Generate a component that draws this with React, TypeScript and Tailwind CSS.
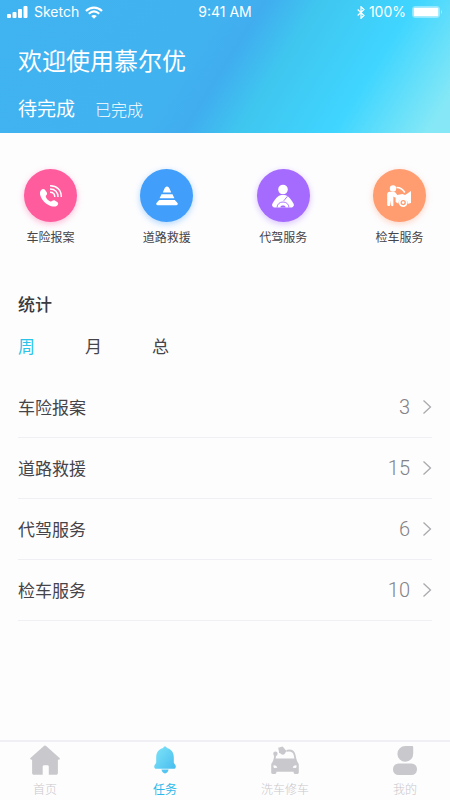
import { useState } from "react";
import type { ReactNode } from "react";

function PhoneIcon() {
  return (
    <svg viewBox="0 0 24 24" className="size-6" fill="none" aria-hidden="true">
      <path
        d="M2.200 6C3.300 4.800 5.300 4.800 6.300 6.200l1.400 2.100c.8 1.300.4 2.300-.6 3.200-.5.500-.5 1 0 1.900.9 1.600 2.100 2.900 3.800 3.800.9.500 1.500.5 2.100-.1.900-.8 2-1 3.200-.3l2 1.300c1.300.9 1.300 2.300.1 3.300-1.500 1.300-3.800 1.500-6 .8C7.200 20.500 3.100 16.400 1.400 11.700.6 9.500.8 7.500 2.200 6Z"
        fill="currentColor"
      />
      <path
        d="M11 1.800c6.900-.1 11.400 4.400 11.300 11.200M11 5c5 0 8.100 3.100 8 8M11 8.200c3 0 4.800 1.800 4.800 4.800"
        stroke="currentColor"
        strokeWidth="1.500"
      />
    </svg>
  );
}

function ConeIcon() {
  return (
    <svg viewBox="0 0 24 24" className="size-6" fill="currentColor" aria-hidden="true">
      <path d="M7.800 8.500 9.300 5C9.900 3.300 10.700 2.400 12 2.400s2.100.9 2.700 2.600l1.500 3.500Z" />
      <path d="M6.500 10.200h11l1.900 4H4.600Z" />
      <path d="M4.200 15.900h15.600l2.700 3.200c.8 1-.1 2.200-1.200 2.200H2.700c-1.100 0-2-1.200-1.200-2.200Z" />
    </svg>
  );
}

function DriverIcon() {
  return (
    <svg viewBox="0 0 24 24" className="size-6" aria-hidden="true">
      <circle cx="12" cy="5.500" r="4.800" fill="currentColor" />
      <path
        d="M7 12.400c1.300-.9 3.200-1.300 5-1.300s3.700.4 5 1.300c1.900 1.300 3.900 4.200 5.600 7.300 1 1.900-.5 3.800-2.500 3.800H3.900c-2 0-3.500-1.900-2.500-3.800C3.100 16.600 5.100 13.700 7 12.400Z"
        fill="currentColor"
      />
      <path d="m16.400 12.300-3.600 4.500M6 23.500c.3-3.400 2.500-5.500 6-5.500s5.700 2.100 6 5.500" fill="none" stroke="#a56bff" strokeWidth="0.900" />
      <path d="m9.300 23.500.4-.9c.4-.8 1.100-1.100 2.300-1.100s1.900.3 2.300 1.100l.4.900Z" fill="#a56bff" />
    </svg>
  );
}

function MechanicIcon() {
  return (
    <svg viewBox="0 0 26 24" className="h-6 w-[26px]" aria-hidden="true">
      <circle cx="7" cy="4.500" r="3.200" fill="currentColor" />
      <path
        d="M1.200 10.500c0-1.900 1-2.900 2.700-2.800l4.400.4c.8.1 1.300.5 1.900 1.400l1 1.500 5.200-.9 2.700.9 5.900-3.900v12l-3 .6a4.800 4.800 0 0 0-9.600 0L9.600 18v-4.500c-.9 0-1.600-.3-2.200-.9V21c0 1.600-2.300 1.600-2.400 0l-.4-4.500L4.200 21c-.2 1.500-3 1.300-3-.3Z"
        fill="currentColor"
      />
      <path d="M10.500 3.500c3.600-.1 6 1.400 8.300 5" fill="none" stroke="currentColor" strokeWidth="1.700" />
      <circle cx="17.200" cy="18.600" r="3.500" fill="#ff9c70" stroke="currentColor" strokeWidth="1.700" />
      <circle cx="17.200" cy="18.600" r="1.300" fill="currentColor" />
    </svg>
  );
}

function HomeIcon() {
  return (
    <svg viewBox="0 0 30 30" className="size-[30px]" fill="currentColor" aria-hidden="true">
      <path d="M13.600 1.200c.9-.8 1.900-.8 2.800 0l12.900 11.500c1 1 .7 2-.8 2h-.6v13.300c0 1.200-.7 1.800-1.800 1.800h-7.300v-8c0-1-.5-1.500-1.500-1.500h-3.100c-1 0-1.500.5-1.500 1.500v8H3.900c-1.100 0-1.800-.6-1.800-1.800V14.700h-.6c-1.500 0-1.800-1-.8-2Z" />
    </svg>
  );
}

function BellIcon() {
  return (
    <svg viewBox="0 0 30 30" className="size-[30px]" aria-hidden="true">
      <defs>
        <linearGradient id="bell" x1="0" y1="0" x2="1" y2="1">
          <stop offset="0.200" stopColor="#74dcf6" />
          <stop offset="1" stopColor="#43b9ee" />
        </linearGradient>
      </defs>
      <path
        d="M15 1.500c1 0 1.700.6 1.800 1.600 4.600 1.100 7 4.500 7 9.100v5.100c0 1.700 2 2.200 2 4.100 0 1.500-.8 2.400-2.100 2.400H6.300c-1.300 0-2.100-.9-2.100-2.400 0-1.900 2-2.400 2-4.100v-5.100c0-4.600 2.400-8 7-9.100.1-1 .8-1.600 1.800-1.600ZM11.400 24.600h7.200c-.5 2.400-1.700 3.800-3.600 3.800s-3.100-1.400-3.600-3.800Z"
        fill="url(#bell)"
      />
    </svg>
  );
}

function CarIcon() {
  return (
    <svg viewBox="0 0 30 30" className="size-[30px]" aria-hidden="true">
      <path
        d="M4 13.500h22l1.500 3.500c.9.800 1.300 1.800 1.300 3.400v6.900c0 1.200-.4 1.700-1.500 1.700h-2.200c-1.100 0-1.500-.6-1.500-1.700v-.6H6.400v.6c0 1.100-.4 1.700-1.500 1.700H2.700c-1.100 0-1.500-.5-1.500-1.700v-6.900c0-1.600.4-2.600 1.300-3.400Z"
        fill="currentColor"
      />
      <path d="M3.600 20.300c1.700-.2 3 .6 3.700 2.400l-2.800.4c-1-.3-1.300-1.400-.9-2.800ZM26.400 20.300c-1.700-.2-3 .6-3.700 2.400l2.800.4c1-.3 1.300-1.400.9-2.800Z" fill="#fdfdfe" />
      <path d="M16.500 5.800c4.500-.9 7.300.4 8.100 4.200l1 5M5.300 9.500 4.500 15" fill="none" stroke="currentColor" strokeWidth="1.800" />
      <path d="M8.400 2.200c1.800 1 2.900-1.200 4.300-.5 1.700.9 2.300 3.400 4 4.200-1.300 1.200-1.700 3.600-3.600 3.800-1.700.2-2.500-1.700-4.200-1.900.8-1.800-1.100-3.500-.5-5.600Z" fill="currentColor" />
      <circle cx="5.400" cy="8.800" r="2.200" fill="currentColor" />
    </svg>
  );
}

function UserIcon() {
  return (
    <svg viewBox="0 0 30 30" className="size-[30px]" fill="currentColor" aria-hidden="true">
      <path d="M15.500 1H22c.8 0 1.200.4 1.200 1.200v6.300A7.900 7.900 0 1 1 15.500 1Z" />
      <rect x="3" y="18.500" width="24" height="11.500" rx="5.500" />
    </svg>
  );
}

function ChevronIcon() {
  return (
    <svg viewBox="0 0 10 16" className="h-4 w-[10px] text-[#aaa9ad]" fill="none" stroke="currentColor" strokeWidth="1.300" aria-hidden="true">
      <path d="m1.500 1.500 7 6.500-7 6.500" />
    </svg>
  );
}

function StatusBar() {
  return (
    <div className="grid h-6 grid-cols-[1fr_auto_1fr] items-center px-[7px] font-['Inter','Liberation_Sans',sans-serif] text-sm leading-6">
      <div className="flex items-center gap-1.5">
        <svg viewBox="0 0 21 12" className="h-3 w-[21px]" fill="currentColor" aria-hidden="true">
          <rect x="0" y="8" width="4" height="4" rx="1" />
          <rect x="5.500" y="6" width="4" height="6" rx="1" />
          <rect x="11" y="3" width="4" height="9" rx="1" />
          <rect x="16.500" y="0" width="4" height="12" rx="1" />
        </svg>
        <span>Sketch</span>
        <svg viewBox="0 0 18 13" className="h-[13px] w-[18px]" aria-hidden="true">
          <path d="M1 5c4.700-4.500 11.300-4.500 16 0M3.800 7.800c3.200-2.900 7.200-2.900 10.400 0" fill="none" stroke="currentColor" strokeWidth="2.200" />
          <path d="M6.200 10c1.700-1.500 3.900-1.500 5.600 0L9 12.700Z" fill="currentColor" />
        </svg>
      </div>
      <span className="text-center">9:41 AM</span>
      <div className="flex items-center justify-end gap-1">
        <svg viewBox="0 0 8 13" className="h-[13px] w-2" fill="none" stroke="currentColor" strokeWidth="1.200" aria-hidden="true">
          <path d="m.7 3.500 6.300 6L4 12.300V.7L7 3.500l-6.300 6" />
        </svg>
        <span>100%</span>
        <svg viewBox="0 0 31 12" className="ml-0.5 h-3 w-[31px]" aria-hidden="true">
          <rect x="0.500" y="0.500" width="27" height="11" rx="2.500" fill="none" stroke="currentColor" strokeOpacity="0.400" />
          <rect x="1.500" y="1.500" width="25" height="9" rx="1" fill="currentColor" />
          <path d="M29 4c1.500.6 1.500 3.400 0 4Z" fill="currentColor" fillOpacity="0.400" />
        </svg>
      </div>
    </div>
  );
}

const services: { name: string; count: number; color: string; icon: ReactNode }[] = [
  { name: "车险报案", count: 3, color: "bg-[#ff5c9e] shadow-[0_2px_6px_#ff5c9e66]", icon: <PhoneIcon /> },
  { name: "道路救援", count: 15, color: "bg-[#419efb] shadow-[0_2px_6px_#419efb66]", icon: <ConeIcon /> },
  { name: "代驾服务", count: 6, color: "bg-[#a56bff] shadow-[0_2px_6px_#a56bff66]", icon: <DriverIcon /> },
  { name: "检车服务", count: 10, color: "bg-[#ff9c70] shadow-[0_2px_6px_#ff9c7066]", icon: <MechanicIcon /> },
];

const navItems: { name: string; icon: ReactNode }[] = [
  { name: "首页", icon: <HomeIcon /> },
  { name: "任务", icon: <BellIcon /> },
  { name: "洗车修车", icon: <CarIcon /> },
  { name: "我的", icon: <UserIcon /> },
];

export default function App() {
  const [done, setDone] = useState(false);
  const [period, setPeriod] = useState("周");

  return (
    <div className="flex min-h-screen flex-col bg-[#fdfdfe] font-['Noto_Sans_CJK_SC',sans-serif] text-[#454448]">
      <header className="bg-[linear-gradient(122deg,#40b3f1_0%,#41b2f0_42%,#40adef_50%,#3fc6ef_60%,#3fd5ff_78%,#86e8f6_96%)] pb-[11px] text-white">
        <StatusBar />
        <h1 className="mt-5 px-[18px] text-2xl leading-8 font-normal">欢迎使用慕尔优</h1>
        <div className="mt-[18px] flex items-baseline gap-5 px-[18px] leading-7">
          <button type="button" onClick={() => setDone(false)} className={done ? "text-base font-light" : "text-[19px]"}>
            待完成
          </button>
          <button type="button" onClick={() => setDone(true)} className={done ? "text-[19px]" : "text-base font-light"}>
            已完成
          </button>
        </div>
      </header>

      <main className="flex-1">
        <section className="flex justify-between px-6 pt-9">
          {services.map((s) => (
            <button key={s.name} type="button" className="flex w-[53px] flex-col items-center gap-1.5">
              <span className={`flex size-[53px] items-center justify-center rounded-full text-white ${s.color}`}>{s.icon}</span>
              <span className="text-xs leading-[18px] whitespace-nowrap">{s.name}</span>
            </button>
          ))}
        </section>

        <section className="px-[18px] pt-[46px]">
          <h2 className="text-[17px] leading-6 font-medium text-[#3a393d]">统计</h2>
          <div className="mt-[18px] flex gap-[50px] text-[17px] leading-6">
            {["周", "月", "总"].map((p) => (
              <button key={p} type="button" onClick={() => setPeriod(p)} className={p === period ? "text-[#2cc3e8]" : ""}>
                {p}
              </button>
            ))}
          </div>
          <ul className="mt-[19px]">
            {services.map((s) => (
              <li key={s.name} className="border-b border-[#f0eff3]">
                <a href="#" className="flex h-[60px] items-center">
                  <span className="flex-1 text-[17px] leading-6">{s.name}</span>
                  <span className="mr-3 font-['Roboto',sans-serif] text-xl leading-6 font-light text-[#838286]">{s.count}</span>
                  <ChevronIcon />
                </a>
              </li>
            ))}
          </ul>
        </section>
      </main>

      <nav className="sticky bottom-0 flex h-[60px] justify-between border-t-2 border-[#f0eff3] bg-[#fdfdfe] px-[15px] pt-[3px]">
        {navItems.map((n) => (
          <a
            key={n.name}
            href="#"
            className={`flex w-[60px] flex-col items-center gap-1.5 ${n.name === "任务" ? "text-[#2db8ea]" : "text-[#c9c8cc]"}`}
          >
            {n.icon}
            <span className={`text-xs leading-4 ${n.name === "任务" ? "" : "font-light"}`}>{n.name}</span>
          </a>
        ))}
      </nav>
    </div>
  );
}
